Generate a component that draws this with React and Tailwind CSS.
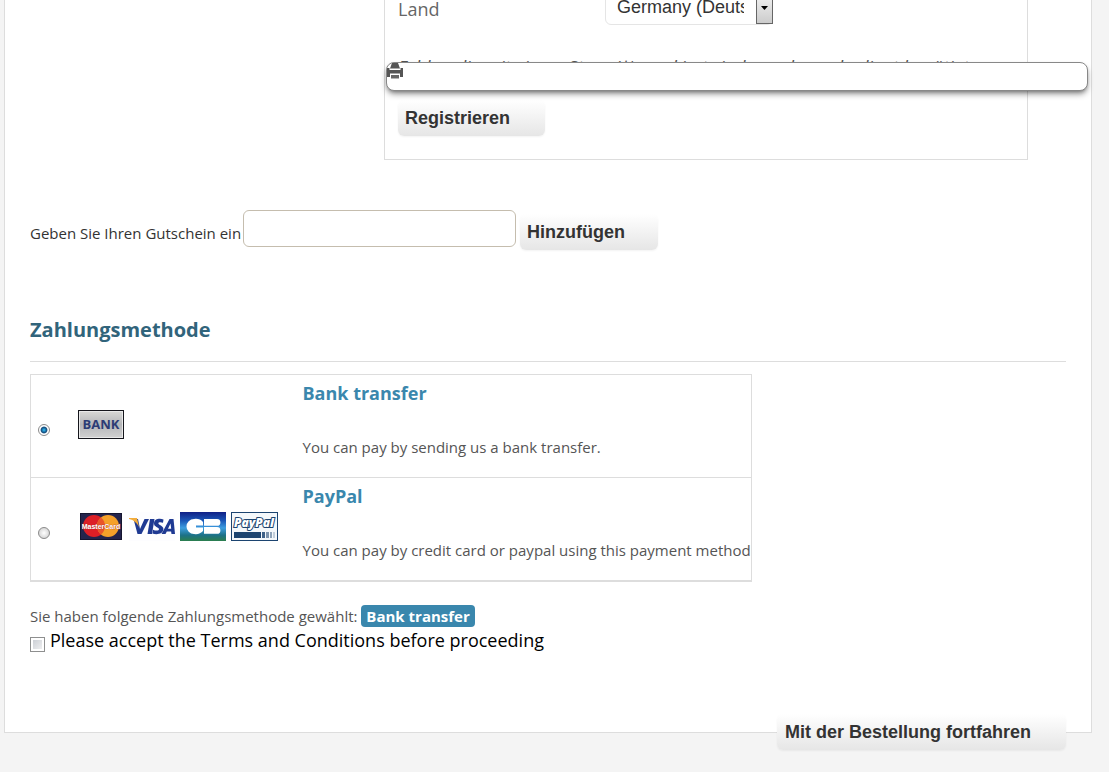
import { useState } from 'react';

const METHODS = [
  {
    id: 'bank',
    name: 'Bank transfer',
    text: 'You can pay by sending us a bank transfer.',
    logos: [BankLogo],
  },
  {
    id: 'paypal',
    name: 'PayPal',
    text: 'You can pay by credit card or paypal using this payment method',
    logos: [MasterCardLogo, VisaLogo, CbLogo, PayPalLogo],
  },
];

function BankLogo() {
  return (
    <svg width="46" height="29" viewBox="0 0 46 29" role="img" aria-label="Bank">
      <defs>
        <linearGradient id="bank" x1="0" y1="0" x2="0" y2="1">
          <stop offset="0" stopColor="#d6d6d4" />
          <stop offset="0.5" stopColor="#b4b5b8" />
          <stop offset="1" stopColor="#cfcfcf" />
        </linearGradient>
      </defs>
      <rect width="46" height="29" fill="#15161c" />
      <rect x="1" y="1" width="44" height="27" fill="#e9e9e9" />
      <rect x="2" y="2" width="42" height="25" fill="url(#bank)" />
      <text x="23" y="19" textAnchor="middle" fontFamily="Open Sans, sans-serif" fontWeight="700" fontSize="13" fill="#2c3c75">BANK</text>
    </svg>
  );
}

function MasterCardLogo() {
  return (
    <svg className="mx-0.5" width="42" height="27" viewBox="0 0 42 27" role="img" aria-label="MasterCard">
      <rect width="42" height="27" fill="#15152f" />
      <rect x="1" y="1" width="40" height="25" fill="#24244c" />
      <circle cx="14" cy="13" r="11" fill="#dc1f26" />
      <circle cx="28" cy="13" r="11" fill="#f5a12a" />
      <path d="M21 4.500a11 11 0 0 1 0 17a11 11 0 0 1 0-17z" fill="#e9552a" />
      <text x="21" y="16" textAnchor="middle" fontFamily="Liberation Sans, sans-serif" fontWeight="700" fontSize="7" fill="#fff" stroke="#b3352b" strokeWidth="0.5" paintOrder="stroke">MasterCard</text>
    </svg>
  );
}

function VisaLogo() {
  return (
    <svg width="46" height="29" viewBox="0 0 46 29" role="img" aria-label="Visa">
      <rect width="46" height="29" fill="#fdfdff" />
      <path d="M4.500 7H9l2 10L15.500 7h4.500L12.500 22H8.500z" fill="#1f3a93" />
      <path d="M0 6h8l2 9C8 11 5 8 0 7z" fill="#f2ac3c" />
      <path d="M21 7h4.500L23 22h-4.500z" fill="#1f3a93" />
      <path d="M34.500 7.500c-4-1.500-9.500-.6-9.500 4 0 3.600 5 3.700 5 5.600 0 2-3.500 1.700-6 .6l-.6 3.700c4 1.600 11 .8 11-4.400 0-3.700-5-3.900-5-5.600 0-1.400 2.600-1.300 4.600-.6z" fill="#1f3a93" />
      <path d="M40.500 7h4L46 22h-3.500l-.4-2.500h-4.300L36.500 22h-4zM41.500 11.500L39 16.700h3.200z" fillRule="evenodd" fill="#1f3a93" />
    </svg>
  );
}

function CbLogo() {
  return (
    <svg width="46" height="29" viewBox="0 0 46 29" role="img" aria-label="Carte Bleue">
      <defs>
        <linearGradient id="cb" x1="0" y1="0" x2="0" y2="1">
          <stop offset="0" stopColor="#101f86" />
          <stop offset="0.300" stopColor="#1b58b8" />
          <stop offset="0.550" stopColor="#3d9ee0" />
          <stop offset="0.800" stopColor="#1c7187" />
          <stop offset="1" stopColor="#2c7f4d" />
        </linearGradient>
      </defs>
      <rect width="46" height="29" fill="url(#cb)" />
      <path d="M23 13.500V10a9 7 0 0 0-9-3 7.500 7.500 0 0 0 0 15 9 7 0 0 0 9-3v-3.500h-7v-2z" fill="#fff" />
      <path d="M24 7h13a3.400 3.400 0 0 1 0 6.800H24zM24 15h13a3.400 3.400 0 0 1 0 6.800H24z" fill="#fff" />
    </svg>
  );
}

function PayPalLogo() {
  return (
    <svg width="47" height="29" viewBox="0 0 47 29" role="img" aria-label="PayPal">
      <rect width="47" height="29" fill="#1c4470" />
      <rect x="1" y="1" width="45" height="27" fill="#f4f8fb" />
      <text x="23" y="15" textAnchor="middle" fontFamily="Open Sans, sans-serif" fontWeight="800" fontStyle="italic" fontSize="12" fill="#fff" stroke="#1c4470" strokeWidth="2" paintOrder="stroke">PayPal</text>
      <rect x="3" y="20" width="27" height="6" fill="#1c4470" />
      <rect x="31" y="20" width="3" height="6" fill="#3f6288" />
      <rect x="35" y="20" width="3" height="6" fill="#7b93ad" />
      <rect x="39" y="20" width="2" height="6" fill="#8fa4ba" />
      <rect x="42" y="20" width="2" height="6" fill="#c3cfdb" />
    </svg>
  );
}

function PrinterIcon() {
  return (
    <svg width="16" height="16" viewBox="0 0 16 16" aria-hidden="true">
      <path d="M5 0h6l2 5.500H3z" fill="#555" />
      <path d="M0 5h2.500v2h11V5H16v9h-3v-3.500H3V14H0z" fill="#555" />
      <path d="M4 12h8v3.500H4z" fill="#666" />
    </svg>
  );
}

function Button({ children, className }) {
  return (
    <button
      type="button"
      className={`h-9 rounded-md bg-linear-to-b from-white to-[#e6e6e6] text-left font-['Liberation_Sans',sans-serif] text-lg font-bold text-[#333] shadow-xs ${className}`}
    >
      {children}
    </button>
  );
}

export default function App() {
  const [method, setMethod] = useState('bank');
  const [accepted, setAccepted] = useState(false);
  const selected = METHODS.find(m => m.id === method);

  return (
    <div className="relative min-h-screen overflow-hidden bg-[#f4f4f4] pb-5 font-['Open_Sans',sans-serif] text-[15px] text-[#555]">
      <main className="-mt-3 mr-[17px] ml-1 border border-[#ddd] bg-white pr-[25px] pl-[25px]">

        {/* Address form */}
        <section className="mr-[38px] ml-[354px] h-[171px] border border-t-0 border-[#ddd] pl-[13px]">
          <div className="flex items-end">
            <label htmlFor="land" className="mb-[7px] w-[207px] text-lg leading-[18px] text-[#666]">Land</label>
            <div className="relative">
              <select
                id="land"
                className="block h-9 w-[168px] appearance-none overflow-hidden rounded-md border border-[#e5e5e5] bg-white pr-7 pl-[11px] font-['Liberation_Sans',sans-serif] text-lg text-[#333]"
              >
                <option>Germany (Deutschland)</option>
              </select>
              <span className="pointer-events-none absolute right-0 bottom-px flex h-8 w-[17px] items-center justify-center border border-[#666] bg-linear-to-b from-[#f4f4f4] to-[#ccc]">
                <svg width="7" height="4" viewBox="0 0 7 4"><path d="M0 0h7L3.500 4z" fill="#000" /></svg>
              </span>
            </div>
          </div>
          <p className="mt-[30px] h-[45px] text-lg leading-6 whitespace-nowrap italic">
            Felder, die mit einem Stern (*) markiert sind, werden unbedingt benötigt
          </p>
          <Button className="w-[147px] pl-[7px]">Registrieren</Button>
        </section>

        {/* Coupon */}
        <section className="mt-[50px] flex h-10 items-start">
          <label htmlFor="coupon" className="w-[213px] pt-[11px] leading-6 whitespace-nowrap text-[#333]">Geben Sie Ihren Gutschein ein</label>
          <input id="coupon" type="text" className="h-[37px] w-[273px] rounded-md border border-[#c5bdae] bg-white px-2 text-lg" />
          <Button className="mt-1 ml-1 w-[138px] pl-[7px]">Hinzufügen</Button>
        </section>

        <h2 className="mt-[62px] border-b border-[#ddd] pb-[13px] text-xl leading-9 font-bold text-[#31647b]">Zahlungsmethode</h2>

        {/* Payment methods */}
        <table className="mt-3 w-[722px] border-collapse border border-b-2 border-[#ddd]">
          <tbody>
            {METHODS.map(m => (
              <tr key={m.id} className="h-[103px] border-b border-[#ddd]">
                <td className="w-[47px] pt-2 pl-[7px]">
                  <input
                    type="radio"
                    name="method"
                    aria-label={m.name}
                    checked={method === m.id}
                    onChange={() => setMethod(m.id)}
                    className="block size-3 appearance-none rounded-full border border-[#8b8b8b] bg-radial from-white to-[#c9c9c9] checked:from-[#2fb4ee] checked:from-5% checked:via-[#124c7c] checked:via-40% checked:to-white checked:to-55%"
                  />
                </td>
                <td className="w-[225px] pb-1">
                  <div className="flex items-center gap-[5px]">
                    {m.logos.map((Logo, i) => <Logo key={i} />)}
                  </div>
                </td>
                <td className="align-top">
                  <h3 className="pt-1 text-lg leading-7 font-bold text-[#3a87ad]">{m.name}</h3>
                  <p className="pt-7 leading-6 whitespace-nowrap">{m.text}</p>
                </td>
              </tr>
            ))}
          </tbody>
        </table>

        <p className="mt-[23px] leading-[22px]">
          Sie haben folgende Zahlungsmethode gewählt:{' '}
          <strong className="inline-block rounded-sm bg-[#3a87ad] px-[5px] font-bold text-white">{selected.name}</strong>
        </p>
        <label className="flex items-center gap-[5px] text-lg leading-[26px] text-black">
          <input
            type="checkbox"
            checked={accepted}
            onChange={e => setAccepted(e.target.checked)}
            className="mt-2.5 size-[15px] appearance-none border border-[#8e8f8f] bg-linear-to-br from-[#c5c9d0] to-[#f6f6f6] ring-2 ring-white ring-inset checked:from-[#3a87ad]"
          />
          Please accept the Terms and Conditions before proceeding
        </label>

        <div className="mt-[61px] -mb-[18px] flex justify-end">
          <Button className="w-[289px] pl-2">Mit der Bestellung fortfahren</Button>
        </div>
      </main>

      {/* Print bar floating over the form */}
      <div className="absolute top-[62px] right-[21px] left-[386px] h-[29px] rounded-lg border border-[#888] bg-white shadow-md shadow-black/40">
        <a href="#print" aria-label="Drucken" className="block size-4"><PrinterIcon /></a>
      </div>
    </div>
  );
}
